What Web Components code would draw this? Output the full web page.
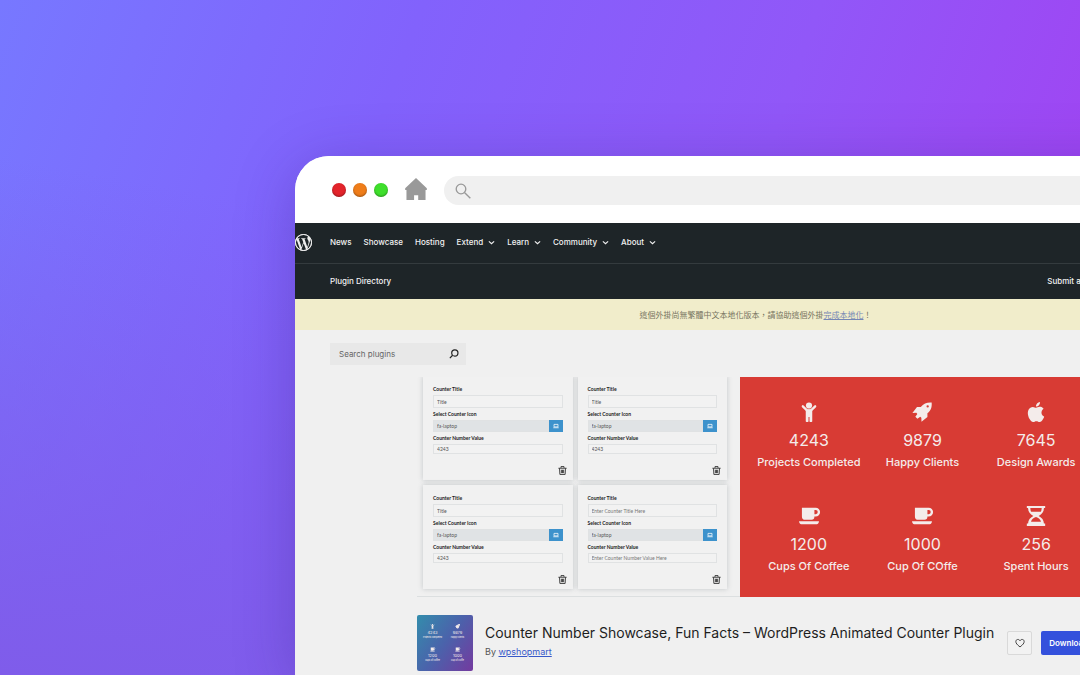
<!DOCTYPE html>
<html lang="en">
<head>
<meta charset="utf-8">
<title>Counter Number Showcase plugin</title>
<style>
html{min-height:100%;background:#7d60ea}
body{margin:0;min-height:100vh;overflow:hidden;font-family:Inter,"Liberation Sans",sans-serif;color:#1e1e1e;
background:linear-gradient(10deg,#7f5cea 0%,#7f5cea00 60%),linear-gradient(110deg,#7778ff 0%,#8262fc 32%,#9157f8 62%,#a63df0 100%)}
</style>
</head>
<body>
<plugin-page></plugin-page>
<script>
function define(name, html, after){
  const t=document.createElement('template');
  t.innerHTML='<style>*{box-sizing:border-box}svg{display:block}button,input{font:inherit;color:inherit;margin:0;border:0;border-radius:0;outline:0;min-width:0}</style>'+html;
  customElements.define(name,class extends HTMLElement{
    connectedCallback(){
      if(this.shadowRoot)return;
      this.attachShadow({mode:'open'}).append(t.content.cloneNode(true));
      if(after)after(this,this.shadowRoot);
    }
  });
}

const ICONS={
  wordpress:'<path fill="currentColor" d="M21.469 6.825c.84 1.537 1.318 3.3 1.318 5.175 0 3.979-2.156 7.456-5.363 9.325l3.295-9.527c.615-1.54.82-2.771.82-3.864 0-.405-.026-.78-.07-1.11m-7.981.105c.647-.03 1.232-.105 1.232-.105.582-.075.514-.93-.067-.899 0 0-1.755.135-2.88.135-1.064 0-2.85-.15-2.85-.15-.585-.03-.661.855-.075.885 0 0 .54.061 1.125.09l1.68 4.605-2.37 7.08L5.354 6.9c.649-.03 1.234-.1 1.234-.1.585-.075.516-.93-.065-.896 0 0-1.746.138-2.874.138-.2 0-.438-.008-.69-.015C4.911 3.15 8.235 1.215 12 1.215c2.809 0 5.365 1.072 7.286 2.833-.046-.003-.091-.009-.141-.009-1.06 0-1.812.923-1.812 1.914 0 .89.513 1.643 1.06 2.531.411.72.89 1.643.89 2.977 0 .915-.354 1.994-.821 3.479l-1.075 3.585-3.9-11.61.001.014zM12 22.784c-1.059 0-2.081-.153-3.048-.437l3.237-9.406 3.315 9.087c.024.053.05.101.078.149-1.12.393-2.325.609-3.582.609M1.211 12c0-1.564.336-3.05.935-4.39L7.29 21.709C3.694 19.96 1.212 16.271 1.211 12M12 0C5.385 0 0 5.385 0 12s5.385 12 12 12 12-5.385 12-12S18.615 0 12 0"/><circle cx="12" cy="12" r="11.300" fill="none" stroke="currentColor" stroke-width="1.400"/>',
  home:'<path fill="currentColor" d="M12 0 23.800 11.200V13H22.400V24H14.400V18.800H9.900V24H1.600V13H.2V11.200z"/>',
  glass:'<g fill="none" stroke="currentColor" stroke-width="2"><circle cx="9" cy="9" r="7.200"/><path d="m14.200 14.200 8.800 8.800"/></g>',
  search:'<g fill="none" stroke="currentColor" stroke-width="2.800"><circle cx="14" cy="9.500" r="7.500"/><path d="M8.600 15 2 22"/></g>',
  chevron:'<path fill="none" stroke="currentColor" stroke-width="4" d="m3 8 9 8 9-8"/>',
  laptop:'<path fill="none" stroke="currentColor" stroke-width="3" d="M4 5.500h16v10H4zM1 19h22"/>',
  trash:'<path fill="none" stroke="currentColor" stroke-width="2.400" d="M1 6h22M8 5V1.500h8V5M4 6l1 16.500h14L20 6M9 10v9m3-9v9m3-9v9"/>',
  heart:'<path fill="none" stroke="currentColor" stroke-width="2.400" d="M12 21.500C5 16 2 12.500 2 8.500 2 3 9 1.500 12 6.500 15 1.500 22 3 22 8.500c0 4-3 7.500-10 13z"/>',
  child:'<circle cx="12" cy="4.200" r="3.700" fill="currentColor"/><path fill="none" stroke="currentColor" stroke-width="2.800" stroke-linecap="round" d="M4.600 5.200 9.500 10h5l4.900-4.800"/><path fill="currentColor" d="M8.100 9h7.800v14.200q0 .8-1 .8h-1.500q-.8 0-.8-.8V18h-1.200v5.200q0 .8-.8.800H9.100q-1 0-1-.8z"/>',
  rocket:'<path fill="currentColor" fill-rule="evenodd" d="M23.600.500C18 .200 14 1.500 10.500 6H6L.500 13.300l4.700-.3 1.200 1.300-2.400 3.400 2.500 2.500 3.400-2.400 1.300 1.200.2 4.700L18.500 18v-4.500C23 10 24 6 23.600.500zM18.800 3.800a1.400 1.400 0 1 1 0 2.800 1.400 1.400 0 0 1 0-2.800z"/>',
  apple:'<path fill="currentColor" d="M12.152 6.896c-.948 0-2.415-1.078-3.960-1.040-2.040.027-3.910 1.183-4.961 3.014-2.117 3.675-.546 9.103 1.519 12.090 1.013 1.454 2.208 3.090 3.792 3.039 1.520-.065 2.090-.987 3.935-.987 1.831 0 2.350.987 3.960.948 1.637-.026 2.676-1.480 3.676-2.948 1.156-1.688 1.636-3.325 1.662-3.415-.039-.013-3.182-1.221-3.220-4.857-.026-3.040 2.480-4.494 2.597-4.559-1.429-2.090-3.623-2.324-4.390-2.376-2-.156-3.675 1.090-4.610 1.090zM15.530 3.830c.843-1.012 1.400-2.427 1.245-3.830-1.207.052-2.662.805-3.532 1.818-.780.896-1.454 2.338-1.273 3.714 1.338.104 2.715-.688 3.559-1.701"/>',
  coffee:'<path fill="currentColor" fill-rule="evenodd" d="M3.500 2H20a5.300 5.300 0 0 1 0 10.600h-1.500Q18.500 16.500 15 16.500H7.500Q3.500 16.500 3.500 12.500zM18.500 4.800v5H20a2.500 2.500 0 0 0 0-5zM0 18.200h24Q23.500 22 20 22H4Q.5 22 0 18.200z"/>',
  hourglass:'<path fill="currentColor" fill-rule="evenodd" d="M1 0h22v2.300h-1.500C21.500 7 19 10 15.200 12c3.800 2 6.300 5 6.300 9H23v3H1v-3h1.500c0-4 2.500-7 6.300-9C5 10 2.500 7 2.500 2.300H1zM5.200 2.300c0 2 .3 3.300 1 4.700h11.600c.7-1.400 1-2.700 1-4.700zM6 19h12c-.8-3-2.800-5-6-5.800C8.800 14 6.800 16 6 19z"/>'
};
define('ui-icon','<style>:host{display:block;flex:none;width:var(--size,20px);height:var(--size,20px)}svg{width:100%;height:100%;overflow:visible}</style><svg viewBox="0 0 24 24" aria-hidden="true"></svg>',
  (h,r)=>r.querySelector('svg').innerHTML=ICONS[h.getAttribute('name')]||'');

define('browser-window',`<style>
:host{display:block;background:#f0f0f0;border-radius:34px 34px 0 0;box-shadow:0 10px 60px rgba(50,25,130,.3)}
.bar{display:flex;align-items:center;gap:17px;height:67px;padding-left:37px;background:#fff;border-radius:34px 34px 0 0}
.dots{display:flex;gap:7px}
.dots i{width:14px;height:14px;border-radius:50%;background:var(--c);box-shadow:inset 0 -1px 2px rgba(0,0,0,.35)}
.home{--size:22px;color:#999;padding-bottom:2px;box-sizing:content-box}
label{flex:1;display:flex;align-items:center;gap:10px;height:29px;margin-top:2px;padding-left:11px;border-radius:15px 0 0 15px;background:#f0f0f0;color:#999;--size:16px}
input{flex:1;background:none;height:20px}
</style>
<div class="bar"><div class="dots"><i style="--c:#e3242b"></i><i style="--c:#ef7d1a"></i><i style="--c:#3fdf2c"></i></div>
<ui-icon class="home" name="home"></ui-icon>
<label><ui-icon name="glass"></ui-icon><input type="text" aria-label="Address"></label></div>
<slot></slot>`);

define('nav-item',`<style>:host{display:block;white-space:nowrap}a{display:flex;align-items:center;gap:5px;color:inherit;text-decoration:none}ui-icon{--size:7px}</style><a href="#"><slot></slot></a>`,
  (h,r)=>{if(h.hasAttribute('menu')){const i=document.createElement('ui-icon');i.setAttribute('name','chevron');r.querySelector('a').append(i)}});

define('site-header',`<style>
:host{display:block;background:#1e2528;color:#f2f2f2;font-size:8px;line-height:12px;font-weight:500}
.top{display:flex;align-items:center;height:41px;padding-bottom:2px;border-bottom:1px solid #343b3e}
.logo{color:#eee;--size:17px;margin-right:18px}
nav{display:flex;gap:12px}
.account{gap:27px}
.sub{display:flex;align-items:center;justify-content:space-between;height:35px;padding:0 35px 1px}
</style>
<div class="top"><a class="logo" href="#" aria-label="WordPress"><ui-icon name="wordpress"></ui-icon></a>
<nav><nav-item>News</nav-item><nav-item>Showcase</nav-item><nav-item>Hosting</nav-item><nav-item menu>Extend</nav-item><nav-item menu>Learn</nav-item><nav-item menu>Community</nav-item><nav-item menu>About</nav-item></nav></div>
<div class="sub"><nav-item>Plugin Directory</nav-item><nav class="account"><nav-item>Submit a plugin</nav-item><nav-item>My favorites</nav-item></nav></div>`);

define('locale-notice',`<style>:host{display:flex;align-items:center;justify-content:center;height:31px;background:#f1edcb;color:#77755f;font:8px/12px "Noto Sans CJK TC",sans-serif}p{margin:0}a{color:#7587b4}</style>
<p><slot></slot><a href="#">完成本地化</a>！</p>`);

define('plugin-search',`<style>:host{display:block;padding:13px 35px 12px}form{display:flex;align-items:center;width:136px;height:22px;padding:0 7px 0 9px;background:#e8e8e8;font-size:8px;color:#1e1e1e}
input{flex:1;background:none;padding:0;height:20px}input::placeholder{color:#666;opacity:1}button{background:none;padding:0;--size:10px}</style>
<form role="search"><input type="search" placeholder="Search plugins" aria-label="Search plugins"><button type="button" aria-label="Search"><ui-icon name="search"></ui-icon></button></form>`);

define('counter-card',`<style>
:host{display:grid;gap:3px;padding:10px 10px 5px;background:#f1f1f1;box-shadow:0 0 5px rgba(60,75,85,.25);font:5px/6px Lato,sans-serif;color:#555}
label{font-weight:700;color:#222}
input{display:block;width:100%;height:13px;padding:0 3px;border:1px solid #e0e2e3;background:#f2f2f2}
input::placeholder{color:#777;opacity:1}
.icon{display:flex}.icon input,.icon button{height:12px}.icon input{background:#e0e3e5}
.icon button{display:grid;place-items:center;width:14px;flex:none;padding:0;background:#3d92cc;color:#fff;--size:6px}
#number{height:10px}
.trash{justify-self:end;margin:9px -4px 0 0;padding:0;background:none;color:#333;--size:9px}
</style>
<label for="title">Counter Title</label><input id="title" placeholder="Enter Counter Title Here">
<label for="icon">Select Counter Icon</label><div class="icon"><input id="icon" value="fa-laptop" readonly><button type="button" aria-label="Choose icon"><ui-icon name="laptop"></ui-icon></button></div>
<label for="number">Counter Number Value</label><input id="number" placeholder="Enter Counter Number Value Here">
<button class="trash" type="button" aria-label="Delete counter"><ui-icon name="trash"></ui-icon></button>`,
 (h,r)=>{if(h.hasAttribute('number')){r.querySelector('#title').value='Title';r.querySelector('#number').value=h.getAttribute('number')}});

define('counter-stat',`<style>:host{display:grid;justify-items:center;white-space:nowrap;color:#f4eceb}
b{font-size:16px;line-height:20px;font-weight:400;margin-top:8px}span{font-size:11px;line-height:16px;font-weight:500;margin-top:4px}
:host([mini]){--size:5px}:host([mini]) b{font-size:4px;line-height:5px;margin-top:1px}:host([mini]) span{font-size:2px;line-height:3px;margin-top:1px}</style>
<ui-icon></ui-icon><b></b><span><slot></slot></span>`,
 (h,r)=>{const i=document.createElement('ui-icon');i.setAttribute('name',h.getAttribute('icon'));r.querySelector('ui-icon').replaceWith(i);r.querySelector('b').textContent=h.getAttribute('value')});

define('plugin-banner',`<style>
:host{display:grid;grid-template:100%/323px 1fr;height:220px;overflow:hidden}
.cards{display:grid;grid-template-columns:1fr 1fr;gap:5px;align-content:start;margin-top:-1px;padding:0 13px 0 6px;border-bottom:1px solid #dcdfe0}
.stats{display:grid;grid-template-columns:repeat(3,1fr);gap:36px 0;align-content:start;padding:25px 12px 0;background:#d83b34}
</style>
<div class="cards"><counter-card number="4243"></counter-card><counter-card number="4243"></counter-card><counter-card number="4243"></counter-card><counter-card></counter-card></div>
<div class="stats"><counter-stat icon="child" value="4243">Projects Completed</counter-stat><counter-stat icon="rocket" value="9879">Happy Clients</counter-stat><counter-stat icon="apple" value="7645">Design Awards</counter-stat>
<counter-stat icon="coffee" value="1200">Cups Of Coffee</counter-stat><counter-stat icon="coffee" value="1000">Cup Of COffe</counter-stat><counter-stat icon="hourglass" value="256">Spent Hours</counter-stat></div>`);

define('plugin-title',`<style>
:host{display:flex;align-items:center;padding:18px 0 4px}
.thumb{display:grid;grid-template-columns:1fr 1fr;gap:8px 0;align-content:center;flex:none;width:56px;height:56px;padding:0 3px;border-radius:2px;background:linear-gradient(125deg,#338dac,#4b62ab 50%,#743a9f);overflow:hidden}
.text{margin-left:12px;padding-bottom:4px;white-space:nowrap}
h1{margin:0;font-size:14px;line-height:20px;font-weight:400}
p{margin:2px 0 0;font-size:9px;line-height:14px;color:#555}p a{color:#3858c9}
.actions{display:flex;gap:9px;margin-left:13px}
button{height:24px;padding:0 8px;border-radius:2px}
.fav{display:grid;place-items:center;width:25px;padding:0;border:1px solid #d9d9d9;background:#f2f2f2;--size:10px;color:#444}
.get{background:#3451dc;color:#fff;font-size:8px;font-weight:600}
</style>
<div class="thumb"><counter-stat mini icon="child" value="4243">Projects Completed</counter-stat><counter-stat mini icon="rocket" value="9879">Happy Clients</counter-stat><counter-stat mini icon="coffee" value="1200">Cups Of Coffee</counter-stat><counter-stat mini icon="coffee" value="1000">Cup Of COffe</counter-stat></div>
<div class="text"><h1>Counter Number Showcase, Fun Facts – WordPress Animated Counter Plugin</h1><p>By <a href="#">wpshopmart</a></p></div>
<div class="actions"><button class="fav" type="button" aria-label="Favorite"><ui-icon name="heart"></ui-icon></button><button class="get" type="button">Download</button></div>`);

define('plugin-page',`<style>:host{display:block;box-sizing:border-box;min-height:100vh;padding:156px 0 0 295px;overflow:hidden}browser-window{margin-right:-136px}main{padding:0 111px 0 122px}</style>
<browser-window><site-header></site-header><locale-notice>這個外掛尚無繁體中文本地化版本，請協助這個外掛</locale-notice><plugin-search></plugin-search>
<main><plugin-banner></plugin-banner><plugin-title></plugin-title></main></browser-window>`);
</script>
</body>
</html>
